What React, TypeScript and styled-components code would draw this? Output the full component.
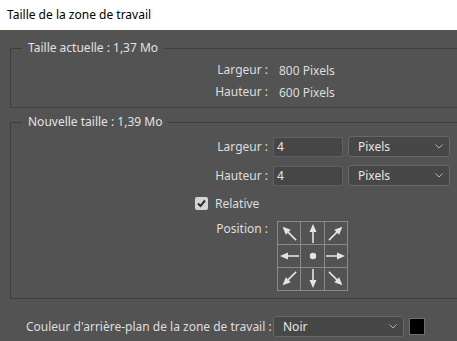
import React from 'react';
import styled, { createGlobalStyle } from 'styled-components';

const Global = createGlobalStyle`
  html, body { margin: 0; padding: 0; background: #535353; }
  body { font-family: "Noto Sans", "DejaVu Sans", sans-serif; font-size: 12px; }
  * { box-sizing: border-box; }
`;

const Window = styled.div`
  width: 457px;
  height: 341px;
  overflow: hidden;
  background: #535353;
  display: flex;
  flex-direction: column;
`;

const TitleBar = styled.div`
  height: 30px;
  flex: none;
  background: #ffffff;
  color: #000000;
  display: flex;
  align-items: center;
  padding: 0 0 2px 7px;
`;

const Body = styled.div`
  padding-left: 10px;
  display: flex;
  flex-direction: column;
  color: #dedede;
`;

const Group = styled.fieldset<{ $top: number; $padTop: number; $padBottom: number }>`
  margin: ${(p) => p.$top}px -6px 0 0;
  padding: ${(p) => p.$padTop}px 0 ${(p) => p.$padBottom}px 0;
  border: 1px solid #3e3e3e;
  min-width: 0;
`;

const Legend = styled.legend`
  margin-left: 11px;
  padding: 0 6px;
  line-height: 16px;
  color: #e2e2e2;
`;

const Row = styled.div<{ $h: number }>`
  display: grid;
  grid-template-columns: 257px 70px 102px;
  column-gap: 5px;
  align-items: center;
  height: ${(p) => p.$h}px;
`;

const Label = styled.div`
  text-align: right;
  white-space: nowrap;
  line-height: 16px;
`;

const Value = styled.div`
  grid-column: 2 / 4;
  padding-left: 6px;
  white-space: nowrap;
`;

const NumberBox = styled.div`
  height: 20px;
  background: #464646;
  border: 1px solid #5f5f5f;
  padding-left: 3px;
  display: flex;
  align-items: center;
  color: #e6e6e6;
`;

const Select = styled.div<{ $w?: number }>`
  height: 21px;
  ${(p) => (p.$w ? `width: ${p.$w}px;` : '')}
  background: #474747;
  border: 1px solid #676767;
  border-radius: 3px;
  display: flex;
  align-items: center;
  justify-content: space-between;
  padding: 0 6px 0 9px;
  color: #e6e6e6;
`;

const CheckRow = styled.div`
  height: 26px;
  display: flex;
  align-items: center;
  padding-left: 184px;
  gap: 7px;
`;

const CheckBox = styled.div`
  width: 13px;
  height: 13px;
  border-radius: 2px;
  background: #d4d4d4;
  display: flex;
  align-items: center;
  justify-content: center;
`;

const PositionRow = styled.div`
  display: grid;
  grid-template-columns: 257px auto;
  column-gap: 9px;
  align-items: start;
  margin-top: 5px;
`;

const AnchorGrid = styled.div`
  display: grid;
  grid-template-columns: 22px 23px 22px;
  grid-template-rows: 22px 22px 22px;
  gap: 1px;
  padding: 1px;
  background: #8a8a8a;
  width: max-content;
`;

const Cell = styled.div`
  background: #535353;
  display: flex;
  align-items: center;
  justify-content: center;
`;

const BottomRow = styled.div`
  display: flex;
  align-items: center;
  margin-top: 17px;
  padding-left: 16px;
`;

const BottomLabel = styled.div`
  width: 247px;
  white-space: nowrap;
`;

const Swatch = styled.div`
  width: 16px;
  height: 17px;
  margin-left: 5px;
  background: #000;
  border: 1px solid #6e6e6e;
`;

const Chevron = () => (
  <svg width="8" height="5" viewBox="0 0 8 5">
    <polyline points="0.5,0.5 4,4 7.5,0.5" fill="none" stroke="#b0b0b0" strokeWidth="1" />
  </svg>
);

const Check = () => (
  <svg width="11" height="11" viewBox="0 0 11 11">
    <polyline points="2,5.5 4.5,8 9,2.5" fill="none" stroke="#2e2e2e" strokeWidth="2" />
  </svg>
);

const Arrow = ({ angle }: { angle: number }) => (
  <svg width="22" height="22" viewBox="0 0 22 22">
    <g transform={`rotate(${angle} 11 11)`} fill="#e4e4e4" stroke="#e4e4e4">
      <line x1="11" y1="9" x2="11" y2="21" strokeWidth="1.6" />
      <polygon points="11,2 7.5,10 14.5,10" stroke="none" />
    </g>
  </svg>
);

const Dot = () => (
  <svg width="22" height="22" viewBox="0 0 22 22">
    <circle cx="11" cy="11" r="3.2" fill="#e4e4e4" />
  </svg>
);

const anchors: (number | null)[] = [-45, 0, 45, -90, null, 90, -135, 180, 135];

export default function App() {
  return (
    <Window>
      <Global />
      <TitleBar>Taille de la zone de travail</TitleBar>
      <Body>
        <Group $top={10} $padTop={3} $padBottom={4}>
          <Legend>Taille actuelle : 1,37 Mo</Legend>
          <Row $h={22}>
            <Label>Largeur :</Label>
            <Value>800 Pixels</Value>
          </Row>
          <Row $h={22}>
            <Label>Hauteur :</Label>
            <Value>600 Pixels</Value>
          </Row>
        </Group>
        <Group $top={6} $padTop={2} $padBottom={7}>
          <Legend>Nouvelle taille : 1,39 Mo</Legend>
          <Row $h={29}>
            <Label>Largeur :</Label>
            <NumberBox>4</NumberBox>
            <Select>
              <span>Pixels</span>
              <Chevron />
            </Select>
          </Row>
          <Row $h={29}>
            <Label>Hauteur :</Label>
            <NumberBox>4</NumberBox>
            <Select>
              <span>Pixels</span>
              <Chevron />
            </Select>
          </Row>
          <CheckRow>
            <CheckBox>
              <Check />
            </CheckBox>
            <span>Relative</span>
          </CheckRow>
          <PositionRow>
            <Label>Position :</Label>
            <AnchorGrid>
              {anchors.map((a, i) => (
                <Cell key={i}>{a === null ? <Dot /> : <Arrow angle={a} />}</Cell>
              ))}
            </AnchorGrid>
          </PositionRow>
        </Group>
        <BottomRow>
          <BottomLabel>Couleur d'arrière-plan de la zone de travail :</BottomLabel>
          <Select $w={131}>
            <span>Noir</span>
            <Chevron />
          </Select>
          <Swatch />
        </BottomRow>
      </Body>
    </Window>
  );
}
